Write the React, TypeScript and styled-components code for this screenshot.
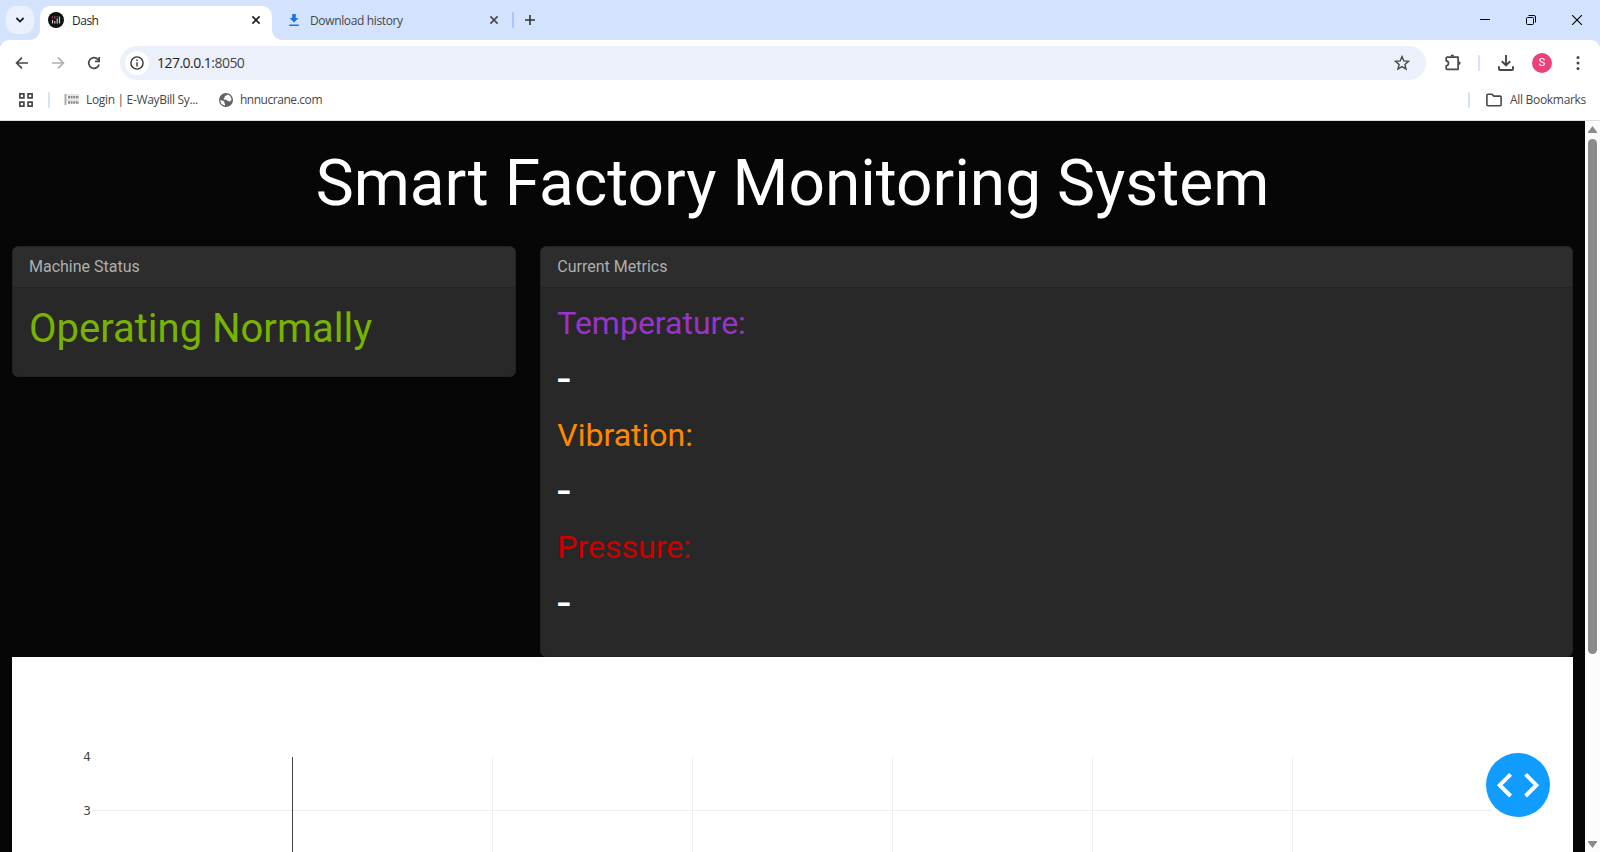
import React from "react";
import styled, { createGlobalStyle } from "styled-components";

const GlobalStyle = createGlobalStyle`
  *, *::before, *::after { box-sizing: border-box; }
  html, body { margin: 0; padding: 0; overflow: hidden; }
  h1, h2, h3, h4 { margin: 0; font-weight: 400; line-height: 1.2; }
`;

const Window = styled.div`
  display: flex;
  flex-direction: column;
  width: 1600px;
  height: 852px;
  overflow: hidden;
  background: #d3e3fd;
  font-family: "Open Sans", "Noto Sans", sans-serif;
  font-size: 12px;
`;

const TabStrip = styled.div`
  display: flex;
  align-items: flex-start;
  height: 40px;
  flex: none;
  padding: 6px 0 0 6px;
`;

const TabSearch = styled.div`
  display: flex;
  align-items: center;
  justify-content: center;
  width: 28px;
  height: 28px;
  margin-right: 6px;
  border-radius: 10px;
  background: #e9f0fe;
`;

const Tab = styled.div<{ $active?: boolean }>`
  position: relative;
  display: flex;
  align-items: center;
  width: ${(p) => (p.$active ? 232 : 240)}px;
  height: ${(p) => (p.$active ? 34 : 28)}px;
  padding: ${(p) => (p.$active ? "0 11px 6px 8px" : "0 13px 0 14px")};
  border-radius: 10px 10px 0 0;
  background: ${(p) => (p.$active ? "#fff" : "transparent")};
  color: ${(p) => (p.$active ? "#1f1f1f" : "#474747")};

  &::before, &::after {
    content: "";
    display: ${(p) => (p.$active ? "block" : "none")};
    position: absolute;
    bottom: 0;
    width: 10px;
    height: 10px;
  }
  &::before { left: -10px; background: radial-gradient(circle at 0 0, transparent 9.5px, #fff 10.2px); }
  &::after { right: -10px; background: radial-gradient(circle at 100% 0, transparent 9.5px, #fff 10.2px); }
`;

const TabTitle = styled.span<{ $spacing: number }>`
  flex: 1;
  margin-left: 8px;
  padding-top: 2px;
  line-height: 16px;
  letter-spacing: ${(p) => p.$spacing}px;
`;

const Divider = styled.span<{ $color?: string; $h?: number }>`
  flex: none;
  width: 2px;
  height: ${(p) => p.$h ?? 16}px;
  border-radius: 1px;
  background: ${(p) => p.$color ?? "#d3e3fd"};
`;

const NewTab = styled.div`
  display: flex;
  align-items: center;
  height: 28px;
  gap: 11px;
`;

const WindowButtons = styled.div`
  display: flex;
  align-items: center;
  gap: 36px;
  height: 28px;
  margin-left: auto;
  padding-right: 18px;
`;

const BrowserBars = styled.div`
  flex: none;
  height: 81px;
  border-radius: 9px 9px 0 0;
  border-bottom: 1px solid #dcdde0;
  background: #fff;
`;

const Toolbar = styled.div`
  display: flex;
  align-items: center;
  height: 46px;
  padding: 0 15px 0 14px;
`;

const NavButtons = styled.div`
  display: flex;
  align-items: center;
  gap: 20px;
  width: 106px;
`;

const AddressBar = styled.div`
  display: flex;
  align-items: center;
  width: 1306px;
  height: 34px;
  padding: 0 16px 0 5px;
  border-radius: 17px;
  background: #ecf0fa;
`;

const InfoBadge = styled.span`
  display: flex;
  align-items: center;
  justify-content: center;
  width: 24px;
  height: 24px;
  border-radius: 50%;
  background: #fff;
`;

const Url = styled.span`
  flex: 1;
  margin-left: 8px;
  color: #1f1f1f;
  font-size: 14px;
  letter-spacing: -0.53px;
  line-height: 20px;
  span { color: #474747; }
`;

const ToolbarActions = styled.div`
  display: flex;
  align-items: center;
  flex: 1;
  justify-content: flex-end;
`;

const Avatar = styled.span`
  display: flex;
  align-items: center;
  justify-content: center;
  width: 20px;
  height: 20px;
  margin: 0 19px 0 18px;
  border-radius: 50%;
  background: #ec407a;
  color: #fff;
  font: 11px/20px Roboto, sans-serif;
`;

const Bookmarks = styled.div`
  display: flex;
  align-items: center;
  height: 28px;
  padding: 0 14px 0 18px;
  color: #474747;
`;

const Bookmark = styled.span<{ $gap: number; $spacing: number }>`
  display: flex;
  align-items: center;
  gap: ${(p) => p.$gap}px;
  line-height: 16px;
  white-space: nowrap;
  letter-spacing: ${(p) => p.$spacing}px;
`;

const Spacer = styled.span<{ $w?: number }>`
  flex: ${(p) => (p.$w ? "none" : "1")};
  width: ${(p) => (p.$w ? `${p.$w}px` : "auto")};
`;

const Viewport = styled.div`
  display: flex;
  flex: 1;
  min-height: 0;
`;

const Page = styled.main`
  width: 1585px;
  height: 731px;
  overflow: hidden;
  padding: 24px 12px 0;
  background: #060606;
  color: #adafae;
  font: 16px/1.5 Roboto, sans-serif;
`;

const Title = styled.h1`
  margin-bottom: 23px;
  padding-top: 1px;
  color: #fff;
  font-size: 64px;
  text-align: center;
`;

const Row = styled.div`
  display: grid;
  grid-template-columns: 504.33px 1032.67px;
  column-gap: 24px;
  align-items: start;
`;

const Card = styled.section`
  border: 1px solid #232323;
  border-radius: 6px;
  background: #282828;
`;

const CardHeader = styled.header`
  padding: 8px 16px;
  border-bottom: 1px solid #232323;
  border-radius: 5px 5px 0 0;
  background: #2d2d2d;
`;

const CardBody = styled.div`
  padding: 16px;
`;

const Status = styled.h3`
  margin-bottom: 7px;
  padding-top: 1px;
  color: #77b300;
  font-size: 40px;
`;

const MetricName = styled.h4<{ $color: string }>`
  margin-bottom: 8px;
  color: ${(p) => p.$color};
  font-size: 32px;
`;

const MetricValue = styled.h2`
  margin-bottom: 8px;
  color: #fff;
  font-size: 48px;
`;

const ChartPanel = styled.div`
  height: 450px;
  background: #fff;
  svg { display: block; }
`;

const DebugButton = styled.div`
  position: absolute;
  left: 1486px;
  top: 753px;
  width: 64px;
  height: 64px;
  border-radius: 50%;
  background: #119dff;
`;

const Scrollbar = styled.div`
  display: flex;
  flex-direction: column;
  align-items: center;
  width: 15px;
  padding: 5px 0 4px;
  background: #fcfcfc;
`;

const Thumb = styled.div`
  width: 9px;
  height: 515px;
  margin: 6px 0 auto;
  border-radius: 5px;
  background: #8b8b8b;
`;

const CloseIcon = ({ color }: { color: string }) => (
  <svg width="10" height="10" viewBox="0 0 10 10" stroke={color} strokeWidth="1.6">
    <path d="M1.4 1.4 8.6 8.6M8.6 1.4 1.4 8.6" />
  </svg>
);

const DashIcon = () => (
  <svg width="16" height="16" viewBox="0 0 16 16">
    <circle cx="8" cy="8" r="8" fill="#111" />
    <path d="M4.5 8v3.5M6.8 9v2.5M9.2 6.5v5M11.5 5v6.5" stroke="#c9c9c9" strokeWidth="1.2" />
    <path d="M4.5 4v2.5" stroke="#8e2f58" strokeWidth="1.2" />
    <path d="M6.8 4v3" stroke="#7a5166" strokeWidth="1.2" />
    <path d="M9.2 4v1.5M11.5 4v1" stroke="#3d7184" strokeWidth="1.2" />
  </svg>
);

const GRID_X = [480, 680, 880, 1080, 1280];

const Chart = () => (
  <svg width="1561" height="450">
    <g fill="none" stroke="#eee" shapeRendering="crispEdges">
      {GRID_X.map((x) => (
        <path key={x} d={`M${x + 0.5} 100V370`} />
      ))}
      <path d="M80 153.5H1481" />
      <path d="M280.5 100V370" stroke="#444" />
    </g>
    <g fill="#444" fontFamily='"DejaVu Sans", Verdana, sans-serif' fontSize="12" textAnchor="end">
      <text x="79" y="104">4</text>
      <text x="79" y="158">3</text>
    </g>
  </svg>
);

const METRICS = [
  { name: "Temperature:", color: "#9933cc" },
  { name: "Vibration:", color: "#ff8800" },
  { name: "Pressure:", color: "#cc0000" },
];

export default function App() {
  return (
    <>
      <GlobalStyle />
      <Window>
        <TabStrip>
          <TabSearch>
            <svg width="10" height="8" viewBox="0 0 10 8" fill="none" stroke="#1f1f1f" strokeWidth="1.8">
              <path d="m1.4 2 3.6 3.6L8.6 2" />
            </svg>
          </TabSearch>
          <Tab $active>
            <DashIcon />
            <TabTitle $spacing={-0.5}>Dash</TabTitle>
            <CloseIcon color="#1f1f1f" />
          </Tab>
          <Tab>
            <Spacer $w={2} />
            <svg width="12" height="12" viewBox="0 0 12 12" fill="#1a73e8">
              <path d="M4.2 0h3.6v4h2.7L6 8.5 1.5 4h2.7zM1.2 10.4h9.6V12H1.2z" />
            </svg>
            <Spacer $w={2} />
            <TabTitle $spacing={-0.36}>Download history</TabTitle>
            <CloseIcon color="#474747" />
          </Tab>
          <NewTab>
            <Divider $color="#a8c7fa" />
            <svg width="10" height="10" viewBox="0 0 10 10" stroke="#333" strokeWidth="1.6">
              <path d="M5 0v10M0 5h10" />
            </svg>
          </NewTab>
          <WindowButtons>
            <svg width="10" height="10" stroke="#000"><path d="M0 4.5h10" /></svg>
            <svg width="10" height="10" viewBox="0 0 10 10" fill="none" stroke="#000" overflow="visible">
              <rect x=".5" y="2.5" width="7" height="7" rx="1" />
              <path d="M2.5.5H8a1.5 1.5 0 0 1 1.5 1.5v5.5" />
            </svg>
            <svg width="10" height="10" viewBox="0 0 10 10" stroke="#000" strokeWidth="1.1">
              <path d="m0 0 10 10M10 0 0 10" />
            </svg>
          </WindowButtons>
        </TabStrip>

        <BrowserBars>
          <Toolbar>
            <NavButtons>
              <svg width="16" height="16" viewBox="0 0 16 16" fill="none" stroke="#474747" strokeWidth="1.7">
                <path d="M14 8H3M8 2.6 2.6 8 8 13.4" />
              </svg>
              <svg width="16" height="16" viewBox="0 0 16 16" fill="none" stroke="#b0b0b0" strokeWidth="1.7">
                <path d="M2 8h11M8 2.6 13.4 8 8 13.4" />
              </svg>
              <svg width="16" height="16" viewBox="0 0 16 16" fill="none" stroke="#474747" strokeWidth="1.7">
                <path d="M13.1 9.5A5.3 5.3 0 1 1 12 4.5l1 1.2" />
                <path d="M13.2 2v4.3H9" />
              </svg>
            </NavButtons>
            <AddressBar>
              <InfoBadge>
                <svg width="14" height="14" viewBox="0 0 14 14" fill="none" stroke="#333" strokeWidth="1.4">
                  <circle cx="7" cy="7" r="6.1" />
                  <path d="M7 6.2v4.2M7 3.5v1.5" />
                </svg>
              </InfoBadge>
              <Url>127.0.0.1<span>:8050</span></Url>
              <svg width="16" height="16" viewBox="0 0 16 16" fill="none" stroke="#474747" strokeWidth="1.4">
                <path d="m8 1.6 1.8 4.3 4.7.4-3.6 3.1 1.1 4.6L8 11.6 4 14l1.1-4.6-3.6-3.1 4.7-.4z" />
              </svg>
            </AddressBar>
            <ToolbarActions>
              <svg width="18" height="18" viewBox="0 0 18 18" fill="none" stroke="#474747" strokeWidth="1.7">
                <path d="M3.2 3.2h10.9v12.1H3.2a1 1 0 0 1-1-1v-2.5c1.4-.2 2.3-1.1 2.3-2.5s-.9-2.3-2.3-2.5V4.2a1 1 0 0 1 1-1z" strokeLinejoin="round" />
                <path d="M6.4 2.5a1.9 1.9 0 0 1 3.8 0zM14.7 7.2a1.9 1.9 0 0 1 0 3.8z" fill="#474747" stroke="none" />
              </svg>
              <Spacer $w={16} />
              <Divider />
              <Spacer $w={18} />
              <svg width="16" height="16" viewBox="0 0 16 16" fill="none" stroke="#474747" strokeWidth="1.9">
                <path d="M8 0v10M3.8 6.2 8 10.3l4.2-4.1M1 11.2V14q0 1 1 1h12q1 0 1-1v-2.8" />
              </svg>
              <Avatar>S</Avatar>
              <svg width="14" height="16" viewBox="0 0 14 16" fill="#474747">
                <circle cx="7" cy="2.6" r="1.5" />
                <circle cx="7" cy="8" r="1.5" />
                <circle cx="7" cy="13.4" r="1.5" />
              </svg>
            </ToolbarActions>
          </Toolbar>
          <Bookmarks>
            <svg width="16" height="16" viewBox="0 0 16 16" fill="none" stroke="#474747" strokeWidth="1.7">
              <path d="M1.9 1.9h4v4h-4zM10.1 1.9h4v4h-4zM1.9 10.1h4v4h-4zM10.1 10.1h4v4h-4z" />
            </svg>
            <Spacer $w={14} />
            <Divider />
            <Spacer $w={14} />
            <Bookmark $gap={6} $spacing={-0.33}>
              <svg width="16" height="14" viewBox="0 0 16 14">
                <path d="M.5 1h2v11h-2z" fill="#aaa" />
                <path d="M4 4.3h11M4 9.5h11" stroke="#888" strokeWidth="2.4" strokeDasharray="2 .6" />
                <path d="M2 2h13M2 7h13" stroke="#ccc" />
              </svg>
              Login | E-WayBill Sy...
            </Bookmark>
            <Spacer $w={21} />
            <Bookmark $gap={7} $spacing={-0.46}>
              <svg width="14" height="14" viewBox="0 0 14 14">
                <circle cx="7" cy="7" r="7" fill="#5f6368" />
                <path d="M8.4 1.6c-.3 1.4-2.8.9-2.7 2.4.1 1.2-1.3.8-1.1 2.1.2 1 2.4.4 3.2 1.2.9.8 2 .5 2.7 1.4.5-.8 1.2-1.2 1.9-1.2A5.6 5.6 0 0 0 8.4 1.6zM1.4 6.7c1.1 1.1 3.2.7 3.8 1.7.6 1-.4 1.6.5 2.2.7.5.3 1.3.2 1.9a5.6 5.6 0 0 1-4.5-5.8z" fill="#fff" />
              </svg>
              hnnucrane.com
            </Bookmark>
            <Spacer />
            <Divider />
            <Spacer $w={16} />
            <Bookmark $gap={8} $spacing={-0.31}>
              <svg width="16" height="14" viewBox="0 0 16 14" fill="none" stroke="#474747" strokeWidth="1.6">
                <path d="M.9 2.2q0-1 1-1h4l1.8 1.9h6.4q1 0 1 1v7.6q0 1-1 1H1.9q-1 0-1-1z" />
              </svg>
              All Bookmarks
            </Bookmark>
          </Bookmarks>
        </BrowserBars>

        <Viewport>
          <Page>
            <Title>Smart Factory Monitoring System</Title>
            <Row>
              <Card>
                <CardHeader>Machine Status</CardHeader>
                <CardBody><Status>Operating Normally</Status></CardBody>
              </Card>
              <Card>
                <CardHeader>Current Metrics</CardHeader>
                <CardBody>
                  {METRICS.map((m) => (
                    <React.Fragment key={m.name}>
                      <MetricName $color={m.color}>{m.name}</MetricName>
                      <MetricValue>-</MetricValue>
                    </React.Fragment>
                  ))}
                </CardBody>
              </Card>
            </Row>
            <ChartPanel><Chart /></ChartPanel>
          </Page>
          <Scrollbar>
            <svg width="9" height="7"><path d="M4.5 0 9 6v1H0V6z" fill="#8b8b8b" /></svg>
            <Thumb />
            <svg width="9" height="7"><path d="M0 0h9v1L4.5 7 0 1z" fill="#8b8b8b" /></svg>
          </Scrollbar>
          <DebugButton>
            <svg width="64" height="64" fill="none" stroke="#fff" strokeWidth="4">
              <path d="M24.6 21.4 13.8 32.2l10.8 10.8M39.6 21.4 50.4 32.2 39.6 43" />
            </svg>
          </DebugButton>
        </Viewport>
      </Window>
    </>
  );
}
